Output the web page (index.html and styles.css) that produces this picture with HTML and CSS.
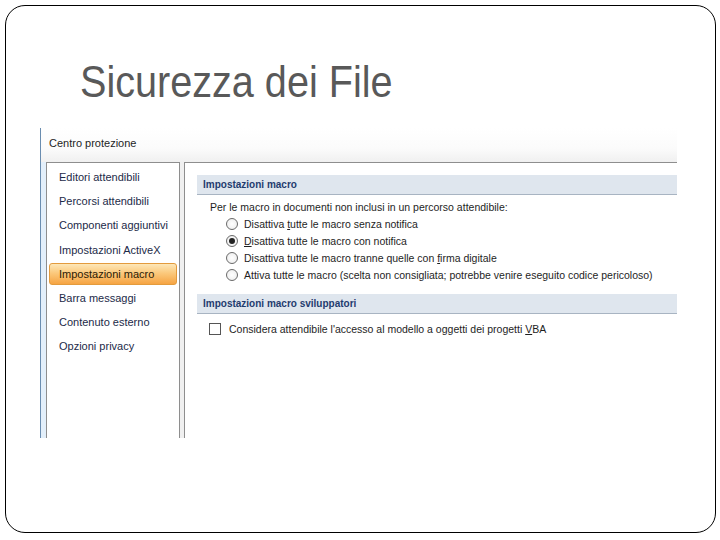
FILE: index.html
```html
<!DOCTYPE html>
<html lang="it">

<head>
    <meta charset="UTF-8">
    <meta name="viewport" content="width=device-width, initial-scale=1.0">
    <title>Sicurezza dei File</title>
    <link rel="stylesheet" href="styles.css">
</head>

<body>
    <div class="slide">
        <h1 class="slide-title">Sicurezza dei File</h1>

        <div class="dialog">
            <div class="dialog-title">Centro protezione</div>
            <div class="dialog-body">
                <ul class="nav">
                    <li>Editori attendibili</li>
                    <li>Percorsi attendibili</li>
                    <li>Componenti aggiuntivi</li>
                    <li>Impostazioni ActiveX</li>
                    <li class="active">Impostazioni macro</li>
                    <li>Barra messaggi</li>
                    <li>Contenuto esterno</li>
                    <li>Opzioni privacy</li>
                </ul>

                <div class="content">
                    <div class="section-head">Impostazioni macro</div>
                    <p class="intro">Per le macro in documenti non inclusi in un percorso attendibile:</p>
                    <div class="options">
                        <label class="option"><span class="radio"></span><span>Disattiva <u>t</u>utte le macro senza notifica</span></label>
                        <label class="option"><span class="radio checked"></span><span><u>D</u>isattiva tutte le macro con notifica</span></label>
                        <label class="option"><span class="radio"></span><span>Disattiva tutte le macro tranne quelle con <u>f</u>irma digitale</span></label>
                        <label class="option"><span class="radio"></span><span>Attiva tutte le macro (scelta non consigliata; potrebbe venire eseguito codice pericoloso)</span></label>
                    </div>

                    <div class="section-head">Impostazioni macro sviluppatori</div>
                    <label class="check"><span class="box"></span><span>Considera attendibile l'accesso al modello a oggetti dei progetti <u>V</u>BA</span></label>
                </div>
            </div>
        </div>
    </div>
</body>

</html>
```

FILE: styles.css
```css
body {
    margin: 0;
    background: #fff;
    font-family: "Liberation Sans", Arial, sans-serif;
}

.slide {
    box-sizing: border-box;
    width: 711px;
    height: 528px;
    margin: 5px 0 0 5px;
    border: 1px solid #000;
    border-radius: 20px;
    overflow: hidden;
}

.slide-title {
    margin: 52px 0 0 74px;
    font-size: 44px;
    line-height: 48px;
    font-weight: normal;
    color: #595959;
    transform: scaleX(0.9);
    transform-origin: left center;
}

.dialog {
    width: 636px;
    height: 310px;
    margin: 22px 0 0 34px;
    border-left: 1px solid #6a8db0;
    display: flex;
    flex-direction: column;
    font-size: 10.5px;
}

.dialog-title {
    height: 34px;
    padding-left: 8px;
    line-height: 30px;
    font-size: 11px;
    color: #1e1e1e;
    background: linear-gradient(#fff, #fbfbfb 60%, #f0f0f0);
}

.dialog-body {
    flex: 1;
    display: flex;
    gap: 4px;
    background: #f0f0f0;
}

.nav {
    list-style: none;
    margin: 0 0 0 5px;
    padding: 3px 2px 0 0;
    width: 130px;
    border: 1px solid #8e8e8e;
    border-bottom: none;
    background: #fff;
    box-shadow: -5px 0 0 #e3effa;
}

.nav li {
    box-sizing: border-box;
    height: 22px;
    margin: 0 0 2.2px 2px;
    padding-left: 9px;
    line-height: 20px;
    font-size: 11px;
    color: #1c2a48;
    border: 1px solid transparent;
    border-radius: 3px;
}

.nav li.active {
    background: linear-gradient(#fde7b8, #fbc97c 45%, #f6a443);
    border-color: #e39b3d;
    color: #2a1a05;
}

.content {
    flex: 1;
    border-left: 1px solid #8e8e8e;
    border-top: 1px solid #8e8e8e;
    background: #fff;
    padding-top: 12px;
    color: #1e1e1e;
}

.section-head {
    height: 19px;
    margin-left: 12px;
    padding-left: 6px;
    line-height: 19px;
    font-size: 10px;
    font-weight: bold;
    color: #1f3c6e;
    background: #dfe6ee;
    border-bottom: 1px solid #a8b4c2;
}

.intro {
    margin: 5px 0 0 25px;
    line-height: 15px;
}

.options {
    display: flex;
    flex-direction: column;
    margin: 0 0 11px 41px;
}

.option {
    display: flex;
    align-items: center;
    gap: 6px;
    height: 17px;
}

.radio {
    box-sizing: border-box;
    width: 12px;
    height: 12px;
    border: 1px solid #6a6a6a;
    border-radius: 50%;
    background: radial-gradient(#fff, #eaeaea);
    display: flex;
    align-items: center;
    justify-content: center;
}

.radio.checked::after {
    content: "";
    width: 6px;
    height: 6px;
    border-radius: 50%;
    background: #222;
}

.check {
    display: flex;
    align-items: center;
    gap: 8px;
    margin: 9px 0 0 24px;
}

.box {
    box-sizing: border-box;
    width: 12px;
    height: 12px;
    border: 1px solid #555;
    background: #fff;
}
```
